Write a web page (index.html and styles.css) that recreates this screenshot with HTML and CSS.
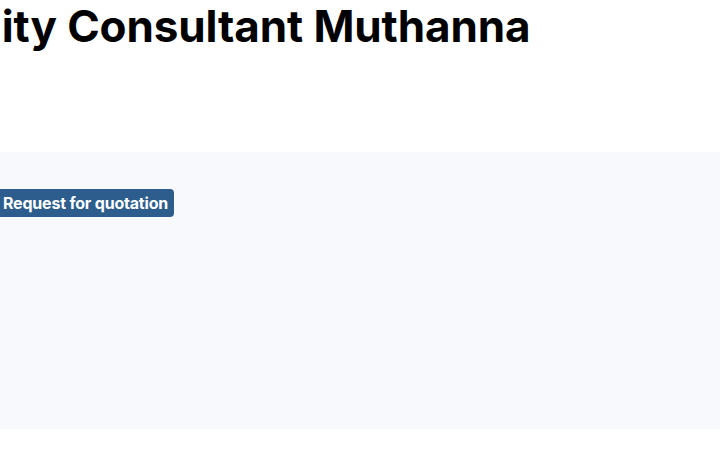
FILE: index.html
```html
<!DOCTYPE html>
<html lang="en">
<head>
    <meta charset="UTF-8">
    <meta name="viewport" content="width=device-width, initial-scale=1.0">
    <title>Quality Consultant Muthanna</title>
    <link rel="stylesheet" href="styles.css">
</head>
<body>
    <!-- Cabecera -->
    <header class="page-header">
        <h1 class="page-title">Quality Consultant Muthanna</h1>
    </header>

    <!-- Bloque de cotización -->
    <section class="quote-band">
        <div class="quote-inner">
            <button class="quote-btn">Request for quotation</button>
        </div>
    </section>
</body>
</html>
```

FILE: styles.css
```css
body {
    margin: 0;
    font-family: Inter, "Noto Sans", Arial, sans-serif;
    color: #000;
    background-color: #fff;
    overflow: hidden;
}

.page-header {
    height: 152px;
    margin-left: -97px;
}

.page-title {
    margin: 0;
    font-size: 44px;
    font-weight: 700;
    line-height: 53px;
    letter-spacing: -0.1px;
    white-space: nowrap;
}

/* Banda gris */
.quote-band {
    background-color: #f8f9fd;
    height: 277px;
}

.quote-inner {
    padding-top: 37px;
    margin-left: -3px;
}

.quote-btn {
    font-family: Inter, "Noto Sans", Arial, sans-serif;
    font-size: 16px;
    font-weight: 700;
    letter-spacing: -0.2px;
    color: #fff;
    background-color: #2c5d8c;
    border: none;
    border-radius: 4px;
    height: 28px;
    padding: 0 6px;
    cursor: pointer;
}
```
